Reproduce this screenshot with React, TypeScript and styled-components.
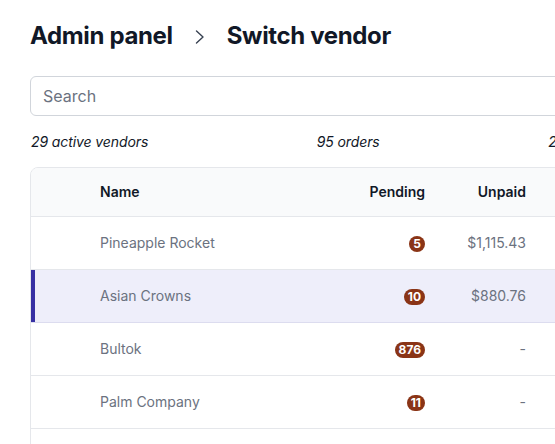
import React from "react";
import styled, { createGlobalStyle } from "styled-components";

const Global = createGlobalStyle`
  html, body { margin: 0; padding: 0; background: #ffffff; overflow: hidden; }
  body { font-family: Inter, "Noto Sans", "Liberation Sans", sans-serif; color: #111827; }
  * { box-sizing: border-box; }
`;

const Page = styled.main`
  width: 900px;
  padding: 20px 0 0 30px;
`;

const TitleRow = styled.h1`
  margin: 0;
  display: flex;
  align-items: center;
  gap: 22px;
  font-size: 24px;
  line-height: 32px;
  font-weight: 700;
  color: #111827;
  letter-spacing: -0.35px;
`;

const Crumb = styled.span``;

const Chevron = styled.svg`
  width: 10px;
  height: 14px;
  flex: none;
  margin-top: 1px;
`;

const SearchInput = styled.input`
  display: block;
  margin-top: 24px;
  width: 860px;
  height: 40px;
  border: 1px solid #d1d5db;
  border-radius: 6px;
  padding: 0 12px;
  font-family: inherit;
  font-size: 16px;
  color: #111827;
  outline: none;
  &::placeholder { color: #6b7280; }
`;

const Stats = styled.div`
  display: flex;
  gap: 168.5px;
  margin-top: 16px;
  font-size: 14px;
  line-height: 20px;
  font-style: italic;
  color: #111827;
  white-space: nowrap;
  padding-left: 1px;
  letter-spacing: -0.1px;
`;

const Table = styled.div`
  margin-top: 15px;
  width: 860px;
  border: 1px solid #e5e7eb;
  border-radius: 8px;
  overflow: hidden;
`;

const Row = styled.div<{ $head?: boolean; $active?: boolean }>`
  display: grid;
  grid-template-columns: 69px 245px 80px 101px 1fr;
  align-items: center;
  height: ${(p) => (p.$head ? "49px" : "53px")};
  border-bottom: 1px solid ${(p) => (p.$active ? "#dcdcef" : "#e5e7eb")};
  background: ${(p) => (p.$head ? "#f9fafb" : p.$active ? "#eeeefa" : "#ffffff")};
  box-shadow: ${(p) => (p.$active ? "inset 4px 0 0 #3730a3" : "none")};
  font-size: 14px;
  line-height: 20px;
  color: ${(p) => (p.$head ? "#111827" : "#6b7280")};
  font-weight: ${(p) => (p.$head ? 600 : 400)};
`;

const Cell = styled.div<{ $right?: boolean }>`
  text-align: ${(p) => (p.$right ? "right" : "left")};
  white-space: nowrap;
`;

const Badge = styled.span`
  display: inline-flex;
  align-items: center;
  justify-content: center;
  min-width: 16px;
  height: 16px;
  padding: 0 4px;
  border-radius: 8px;
  background: #8a3416;
  color: #ffffff;
  font-size: 12px;
  font-weight: 700;
  line-height: 16px;
  vertical-align: middle;
`;

const vendors = [
  { name: "Pineapple Rocket", pending: 5, unpaid: "$1,115.43" },
  { name: "Asian Crowns", pending: 10, unpaid: "$880.76", active: true },
  { name: "Bultok", pending: 876, unpaid: "-" },
  { name: "Palm Company", pending: 11, unpaid: "-" },
  { name: "Sunrise Foods", pending: 3, unpaid: "-" },
];

export default function App() {
  return (
    <>
      <Global />
      <Page>
        <TitleRow>
          <Crumb>Admin panel</Crumb>
          <Chevron viewBox="0 0 10 14" fill="none">
            <path d="M1.5 1 L8 7 L1.5 13" stroke="#374151" strokeWidth="1.4" strokeLinecap="round" strokeLinejoin="round" />
          </Chevron>
          <Crumb>Switch vendor</Crumb>
        </TitleRow>
        <SearchInput placeholder="Search" />
        <Stats>
          <span>29 active vendors</span>
          <span>95 orders</span>
          <span>2 overdue</span>
        </Stats>
        <Table>
          <Row $head>
            <Cell />
            <Cell>Name</Cell>
            <Cell $right>Pending</Cell>
            <Cell $right>Unpaid</Cell>
            <Cell />
          </Row>
          {vendors.map((v) => (
            <Row key={v.name} $active={v.active}>
              <Cell />
              <Cell>{v.name}</Cell>
              <Cell $right>
                <Badge>{v.pending}</Badge>
              </Cell>
              <Cell $right>{v.unpaid}</Cell>
              <Cell />
            </Row>
          ))}
        </Table>
      </Page>
    </>
  );
}
